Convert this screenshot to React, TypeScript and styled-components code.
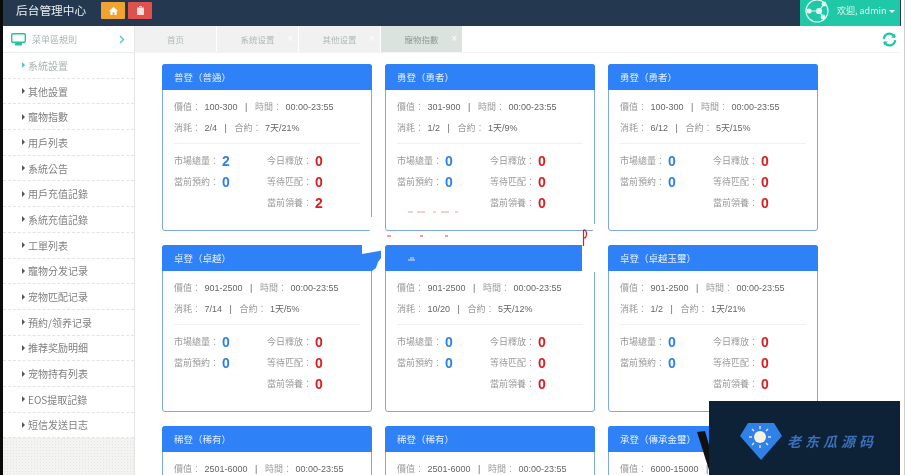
import React from "react";
import styled, { createGlobalStyle } from "styled-components";

const Global = createGlobalStyle`
  html, body { margin: 0; padding: 0; background: #fff; height: 100%; overflow: hidden; }
  body { font-family: "Noto Sans CJK TC", "Liberation Sans", sans-serif; }
  * { box-sizing: border-box; }
`;

const Page = styled.div`
  width: 905px; height: 475px; position: relative; overflow: hidden;
  padding: 0 4px 0 3px; background: #fff; filter: blur(0.4px);
  &::before { content: ""; position: absolute; left: 0; top: 0; bottom: 0; width: 3px; background: #0a0a0a; }
  &::after { content: ""; position: absolute; right: 0; top: 0; bottom: 0; width: 1px; background: #cfcfcf; }
`;
const Header = styled.header`
  height: 26px; background: #24394f; display: flex; align-items: flex-start; color: #fff; padding-right: 1px;
`;
const Title = styled.div`
  font-size: 11.7px; margin-left: 13px; width: 85px; color: #e8edf0; line-height: 20px; white-space: nowrap;
`;
const HeadButton = styled.button<{ $bg: string }>`
  width: 24px; height: 17px; margin: 2px 3px 0 0; padding: 0; border: none; border-radius: 1px;
  background: ${(p) => p.$bg}; display: flex; align-items: center; justify-content: center;
`;
const Welcome = styled.div`
  margin-left: auto; width: 100px; height: 26px; background: #1fc9a7; display: flex; align-items: flex-start;
  padding: 0 0 0 5px; gap: 8px; font-size: 9px; line-height: 21px; color: #dff6f0; white-space: nowrap;
  svg { margin-top: -1px; }
`;
const Caret = styled.span`
  width: 0; height: 0; border: 3px solid transparent; border-top: 3px solid #fff; border-bottom: 0; margin-left: 3px; display: inline-block; vertical-align: middle;
`;
const Body = styled.div`
  display: flex; height: 449px;
`;
const Side = styled.aside`
  width: 132px; flex: none; background: #f3f3f1;
  background-image: radial-gradient(#e4e4e2 0.5px, transparent 0.6px); background-size: 3px 3px;
  border-right: 1px solid #e6e6e6;
`;
const SideHead = styled.div`
  height: 27px; background: #fff; display: flex; align-items: center; padding: 0 9px 0 8px; font-size: 9px; color: #a9b5b5;
  border-bottom: 1px solid #e8eeee;
  span { margin-left: 6px; flex: 1; }
`;
const SideItem = styled.div<{ $active?: boolean }>`
  height: 25.7px; background: #fff; display: flex; align-items: center; padding-left: 19px; font-size: 10px;
  color: ${(p) => (p.$active ? "#a8b4b2" : "#808080")}; border-bottom: 1px dashed #e4e4e4;
  &::before { content: ""; border: 3px solid transparent; border-left: 3px solid ${(p) => (p.$active ? "#4fc4d0" : "#555")}; border-right: 0; margin-right: 3px; }
`;
const Main = styled.main`
  flex: 1; min-width: 0; display: flex; flex-direction: column;
`;
const TabBar = styled.div`
  height: 27px; flex: none; display: flex; align-items: stretch; border-bottom: 1px solid #f3f3f3;
`;
const Tab = styled.div<{ $active?: boolean }>`
  width: 82px; border-right: 1px solid #fff; background: ${(p) => (p.$active ? "#dbe3df" : "#f0f1f0")};
  position: relative; display: flex; align-items: center; justify-content: center; font-size: 8.5px;
  color: ${(p) => (p.$active ? "#8f9a98" : "#aebab6")};
`;
const Close = styled.i`
  position: absolute; right: 5px; top: 8px; font-style: normal; font-size: 10px; line-height: 10px; color: #fff; font-family: "Liberation Sans", sans-serif;
`;
const Refresh = styled.div`
  margin-left: auto; margin-right: 4px; display: flex; align-items: center; color: #1fc9a7;
`;
const Grid = styled.div`
  display: grid; grid-template-columns: repeat(3, 210px); gap: 14px 13px; padding: 11px 0 0 27px; align-content: start;
`;
const Card = styled.section`
  height: 167px; border: 1px solid #7fa9dc; border-radius: 3px; background: #fff; position: relative;
`;
const CardHead = styled.div`
  height: 26px; margin: -1px -1px 0; background: #2f81f7; border-radius: 3px 3px 0 0; color: #e4effc;
  font-size: 9.5px; display: flex; align-items: center; padding-left: 12px;
`;
const Info = styled.div`
  margin: 0 11px; height: 54px; padding-top: 6px; border-bottom: 1px solid #f0f0f0;
`;
const InfoRow = styled.div`
  height: 21px; display: flex; align-items: center; font-size: 9px; color: #666; font-family: "Liberation Sans", "Noto Sans CJK TC", sans-serif; white-space: pre;
  em { font-style: normal; color: #999; margin-right: 1px; font-family: "Noto Sans CJK TC", sans-serif; }
`;
const Stats = styled.div`
  margin: 6px 0 0 11px; display: grid; grid-template-columns: 93px 93px; grid-auto-rows: 21px;
`;
const Stat = styled.div`
  display: flex; align-items: center; font-size: 9px; color: #999;
  span { width: 48px; flex: none; white-space: nowrap; }
`;
const Num = styled.b<{ $red?: boolean }>`
  font-family: "Liberation Sans", sans-serif; font-size: 14px; color: ${(p) => (p.$red ? "#d9201f" : "#2f81e8")};
`;
const Torn = styled.svg`
  position: absolute; left: 355px; top: 205px; pointer-events: none;
`;
const Mark = styled.div`
  position: absolute; left: 709px; top: 401px; width: 191px; height: 74px; background: #0d2137;
  display: flex; align-items: center; padding: 5px 0 0 31px; gap: 5px;
`;
const MarkText = styled.span`
  font-family: "Noto Sans CJK SC", sans-serif; font-weight: 700; font-size: 14px; letter-spacing: 4px; color: #3a70b8; font-style: italic;
`;
const Stroke = styled.svg`
  position: absolute; left: 695px; top: 428px;
`;

const items = ["系統設置","其他設置","寵物指數","用戶列表","系統公告","用戶充值記錄","系統充值記錄","工單列表","寵物分发记录","宠物匹配记录","預約/领养记录","推荐奖励明细","宠物持有列表","EOS提取記錄","短信发送日志"];

type C = { t: string; v: string; c: string; h: string; n: number; l: number };
const cards: C[] = [
  { t: "普登（普通）", v: "100-300", c: "2/4", h: "7天/21%", n: 2, l: 2 },
  { t: "勇登（勇者）", v: "301-900", c: "1/2", h: "1天/9%", n: 0, l: 0 },
  { t: "勇登（勇者）", v: "100-300", c: "6/12", h: "5天/15%", n: 0, l: 0 },
  { t: "卓登（卓越）", v: "901-2500", c: "7/14", h: "1天/5%", n: 0, l: 0 },
  { t: "", v: "901-2500", c: "10/20", h: "5天/12%", n: 0, l: 0 },
  { t: "卓登（卓越玉璽）", v: "901-2500", c: "1/2", h: "1天/21%", n: 0, l: 0 },
  { t: "稀登（稀有）", v: "2501-6000", c: "1/2", h: "1天/5%", n: 0, l: 0 },
  { t: "稀登（稀有）", v: "2501-6000", c: "1/2", h: "1天/5%", n: 0, l: 0 },
  { t: "承登（傳承金璽）", v: "6000-15000", c: "1/2", h: "1天/5%", n: 0, l: 0 },
];

function PriceCard({ d }: { d: C }) {
  return (
    <Card>
      <CardHead>{d.t}</CardHead>
      <Info>
        <InfoRow><em>價值：</em>{` ${d.v}   |   `}<em>時間：</em>{" 00:00-23:55"}</InfoRow>
        <InfoRow><em>消耗：</em>{` ${d.c}   |   `}<em>合約：</em>{` ${d.h}`}</InfoRow>
      </Info>
      <Stats>
        <Stat><span>市場總量：</span><Num>{d.n}</Num></Stat>
        <Stat><span>今日釋放：</span><Num $red>0</Num></Stat>
        <Stat><span>當前預約：</span><Num>0</Num></Stat>
        <Stat><span>等待匹配：</span><Num $red>0</Num></Stat>
        <div />
        <Stat><span>當前領養：</span><Num $red>{d.l}</Num></Stat>
      </Stats>
    </Card>
  );
}

export default function App() {
  return (
    <Page>
      <Global />
      <Header>
        <Title>后台管理中心</Title>
        <HeadButton $bg="#f0a32f" aria-label="home">
          <svg width="9" height="8" viewBox="0 0 10 9"><path d="M5 0 0 4.500h1.500V9h2.500V6h2v3h2.500V4.500H10z" fill="#fff" /></svg>
        </HeadButton>
        <HeadButton $bg="#e0504c" aria-label="delete">
          <svg width="7" height="9" viewBox="0 0 7 9"><path d="M0 1.500h7V9H0zM2 0h3v1H2z" fill="#fbdcdc" /></svg>
        </HeadButton>
        <Welcome>
          <svg width="24" height="24" viewBox="0 0 24 24" fill="none" stroke="#dff6f0" strokeWidth="1.200">
            <circle cx="12" cy="12" r="11" />
            <path d="M4 12h10M14 12 19 5M14 12l4 6" />
            <circle cx="4" cy="12" r="2" fill="#dff6f0" />
            <circle cx="14" cy="12" r="2.500" fill="#dff6f0" />
            <circle cx="19" cy="5" r="1.800" fill="#dff6f0" />
            <circle cx="18" cy="18" r="1.800" fill="#dff6f0" />
          </svg>
          <span>欢迎, admin<Caret /></span>
        </Welcome>
      </Header>
      <Body>
        <Side>
          <SideHead>
            <svg width="15" height="13" viewBox="0 0 15 13">
              <rect x="0.700" y="0.700" width="13.600" height="8.600" rx="1" fill="#fff" stroke="#22c3a3" strokeWidth="1.400" />
              <path d="M1 9h13l-4 2H5z" fill="#22c3a3" />
              <rect x="4" y="11" width="7" height="1.500" fill="#22c3a3" />
            </svg>
            <span>菜单區規則</span>
            <svg width="6" height="9" viewBox="0 0 6 9" fill="none" stroke="#55c5cf" strokeWidth="1.400"><path d="m1 1 3.500 3.500L1 8" /></svg>
          </SideHead>
          {items.map((x, i) => <SideItem key={x} $active={i === 0}>{x}</SideItem>)}
        </Side>
        <Main>
          <TabBar>
            <Tab>首页</Tab>
            <Tab>系统设置<Close>×</Close></Tab>
            <Tab>其他设置<Close>×</Close></Tab>
            <Tab $active>寵物指數<Close>×</Close></Tab>
            <Refresh>
              <svg width="15" height="15" viewBox="0 0 24 24" fill="none" stroke="#1fc9a7" strokeWidth="3.600">
                <path d="M3 11a9 9 0 0 1 16-5l2 2" /><path d="M21 2.500V9h-6.500" fill="#1fc9a7" stroke="none" />
                <path d="M21 13a9 9 0 0 1-16 5l-2-2" /><path d="M3 21.500V15h6.500" fill="#1fc9a7" stroke="none" />
              </svg>
            </Refresh>
          </TabBar>
          <Grid>
            {cards.map((d, i) => <PriceCard key={i} d={d} />)}
          </Grid>
        </Main>
      </Body>
      <Torn width="245" height="70" viewBox="0 0 245 70">
        <rect x="15" y="12" width="3" height="17" fill="#fff" />
        <rect x="17" y="40" width="13" height="26" fill="#fff" />
        <path d="M2 66V47L26 45V53L23 57L21 63L17 66z" fill="#2f81f7" />
        <path d="M7 40H30V45L7 49z" fill="#fff" />
        <rect x="227" y="31" width="16" height="36" fill="#fff" />
        <rect x="238" y="19" width="4" height="14" fill="#fff" />
        <path d="M53 7h5M62 7h8M78 7h3M86 7h8M100 7h3" stroke="#e6a0a0" strokeWidth="1" />
        <path d="M32 31h4M65 31h3M90 31h3" stroke="#e03a36" strokeWidth="1" />
        <path d="M228.500 25v16M228.500 25c4-1 4 8 0 8" fill="none" stroke="#d9201f" strokeWidth="1.200" />
        <path d="M53 55h7M55 53h4" stroke="#dbe8fb" strokeWidth="1" />
      </Torn>
      <Stroke width="16" height="45" viewBox="0 0 16 45"><path d="M2 4 10 3 14 17V42z" fill="#111" /></Stroke>
      <Mark>
        <svg width="42" height="38" viewBox="0 0 42 38">
          <path d="M8 1h26l8 13-21 24L0 14z" fill="#2f81e8" />
          <circle cx="20" cy="15" r="6" fill="#f7f1e0" />
          <g stroke="#dbe9fb" strokeWidth="1.400"><path d="M20 4v3M20 23v3M9 15h3M28 15h3M12 7l2 2M26 21l2 2M28 7l-2 2M14 21l-2 2" /></g>
        </svg>
        <MarkText>老东瓜源码</MarkText>
      </Mark>
    </Page>
  );
}
